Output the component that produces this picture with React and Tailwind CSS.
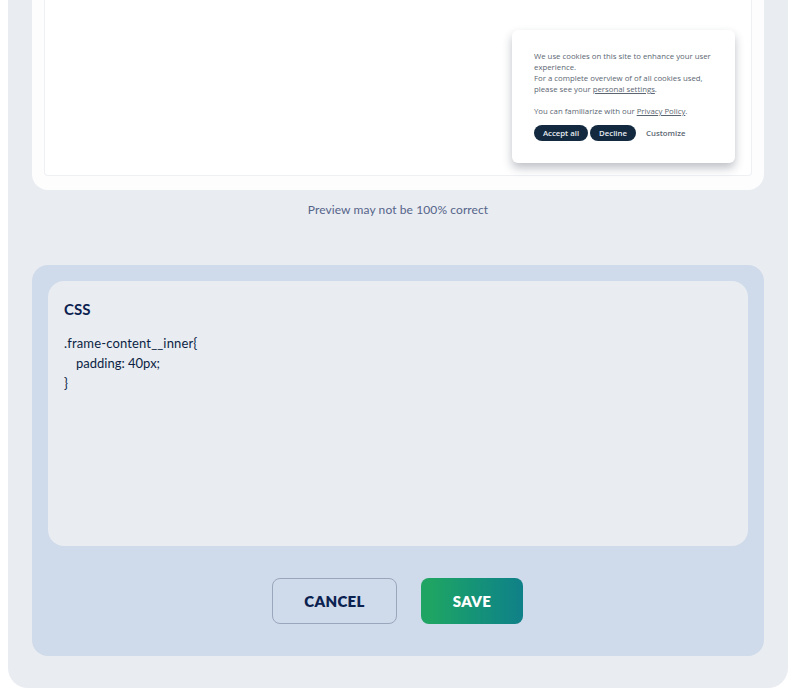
export default function App() {
  return (
    <div className="w-[798px] h-[700px] overflow-hidden bg-white font-['Lato',sans-serif]">
      <div className="ml-2 w-[780px] h-[688px] bg-[#e9ecf1] rounded-b-[20px] px-6">
        <div className="w-[732px] h-[190px] bg-[#fdfdfe] rounded-b-2xl px-3 pb-3.5">
          <div className="relative h-full bg-white border-x border-b border-[#eef0f4] rounded-b-sm">
            <div className="absolute left-[467px] top-[30px] w-[223px] h-[133px] bg-white rounded-md shadow-[0_5px_10px_rgba(40,50,70,0.3)] pl-[22px] pr-[20px] pt-[21px] font-['Open_Sans',sans-serif] text-[7.8px] leading-[11px] text-[#5b6672]">
              <p>We use cookies on this site to enhance your user experience.</p>
              <p>For a complete overview of of all cookies used, please see your <span className="underline">personal settings</span>.</p>
              <p className="mt-[11px]">You can familiarize with our <span className="underline">Privacy Policy</span>.</p>
              <div className="flex items-center mt-[8px] gap-[2px] font-semibold">
                <span className="w-[54px] h-4 rounded-full bg-[#12293f] text-[#e8ecf2] flex items-center justify-center">Accept all</span>
                <span className="w-[46px] h-4 rounded-full bg-[#12293f] text-[#e8ecf2] flex items-center justify-center">Decline</span>
                <span className="ml-[8px] text-[#5b6672]">Customize</span>
              </div>
            </div>
          </div>
        </div>
        <p className="mt-[13px] text-center text-[12px] leading-[14px] text-[#55648a] tracking-[0.1px]">Preview may not be 100% correct</p>
        <div className="mt-[48px] w-[732px] h-[391px] bg-[#cfdaea] rounded-2xl p-4">
          <div className="h-[265px] bg-[#e9ecf1] rounded-2xl px-4 pt-[19px]">
            <h2 className="text-[15px] leading-[18px] font-bold text-[#0b2150]">CSS</h2>
            <div className="mt-[15px] text-[13px] leading-5 text-[#0b1f44]">
              <div className="tracking-[0.15px]">.frame-content__inner{"{"}</div>
              <div className="pl-3">padding: 40px;</div>
              <div>{"}"}</div>
            </div>
          </div>
          <div className="flex justify-center gap-6 mt-8 pr-px">
            <button className="w-[125px] h-[46px] rounded-lg border border-[#9aa6bb] text-[15px] font-extrabold text-[#0b2150] tracking-[0.3px]">CANCEL</button>
            <button className="w-[102px] h-[46px] rounded-lg bg-gradient-to-r from-[#1fa463] from-10% to-[#108088] text-[15px] font-extrabold text-white tracking-[0.3px]">SAVE</button>
          </div>
        </div>
      </div>
    </div>
  );
}
